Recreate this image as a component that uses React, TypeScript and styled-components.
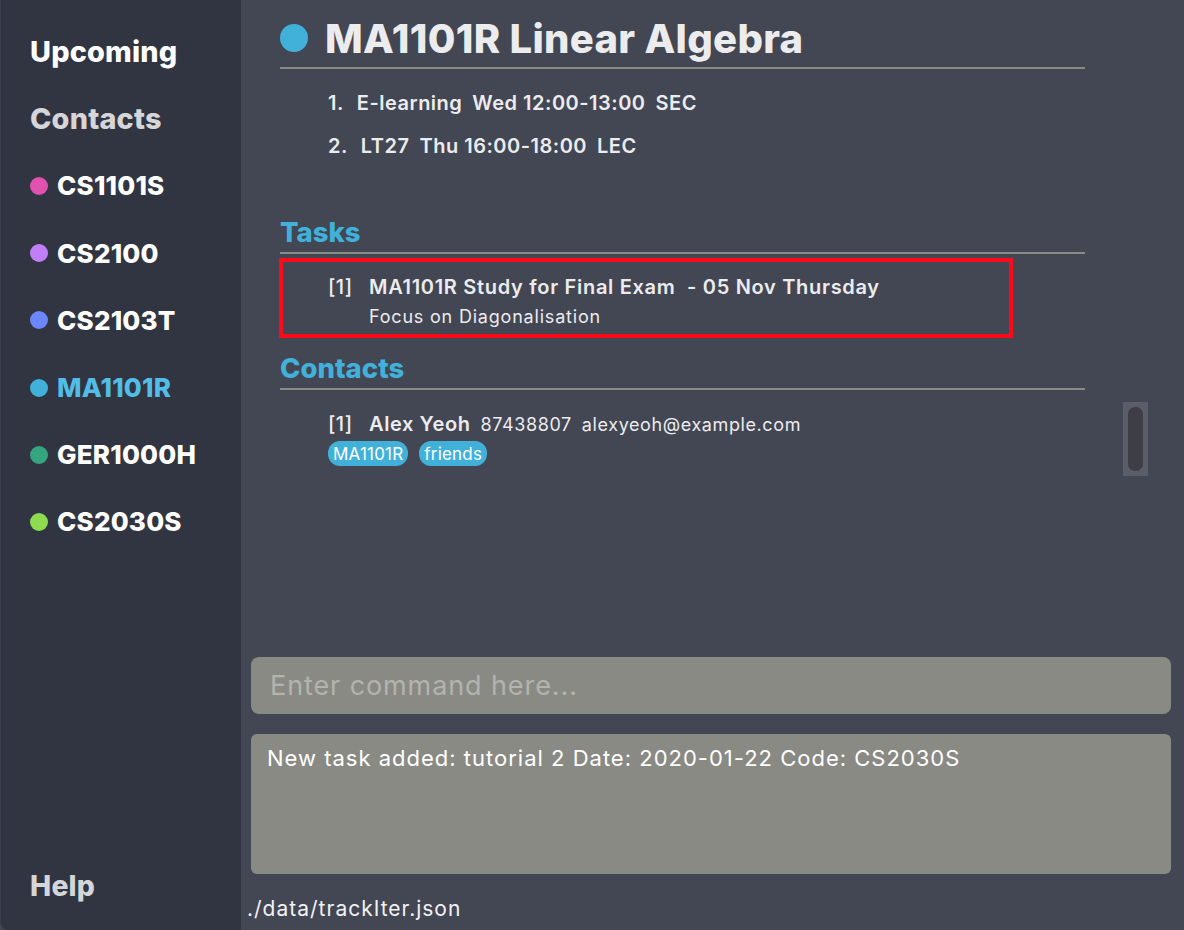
import React from "react";
import styled, { createGlobalStyle } from "styled-components";

const Global = createGlobalStyle`
  html, body { margin: 0; padding: 0; background: #434653; }
  body { font-family: "Inter", "Noto Sans", sans-serif; }
  * { box-sizing: border-box; }
`;

const Shell = styled.div`
  display: grid;
  grid-template-columns: 241px 1fr;
  width: 1184px;
  height: 930px;
  overflow: hidden;
`;

const Sidebar = styled.nav`
  background: #313441;
  display: flex;
  flex-direction: column;
  padding: 18px 0 10px 29px;
  border-bottom-left-radius: 8px;
  border-left: 1px solid #3b3e4c;
`;

const NavItem = styled.div<{ $color?: string; $heading?: "main" | "muted" }>`
  height: 67.2px;
  display: flex;
  align-items: center;
  gap: 9px;
  font-weight: 800;
  font-size: ${(p) => (p.$heading ? "28.8px" : "26px")};
  letter-spacing: 0.2px;
  color: ${(p) => p.$color ?? (p.$heading === "muted" ? "#d6d6d8" : "#ffffff")};
`;

const HelpItem = styled(NavItem)`
  margin-top: auto;
  font-size: 28.3px;
`;

const Dot = styled.span<{ $color: string; $size?: number }>`
  width: ${(p) => p.$size ?? 18}px;
  height: ${(p) => p.$size ?? 18}px;
  border-radius: 50%;
  background: ${(p) => p.$color};
  flex-shrink: 0;
`;

const Main = styled.main`
  display: flex;
  flex-direction: column;
  min-width: 0;
`;

const ContentArea = styled.section`
  flex: 1;
  display: grid;
  grid-template-columns: 805px 1fr;
  padding-left: 39px;
`;

const Content = styled.div`
  display: flex;
  flex-direction: column;
  color: #ececee;
`;

const TitleRow = styled.header`
  display: flex;
  align-items: center;
  gap: 17px;
  height: 69px;
  padding-top: 9px;
  border-bottom: 2px solid #8b8b86;
`;

const Title = styled.h1`
  margin: 0;
  font-size: 40px;
  font-weight: 800;
  color: #ececee;
  letter-spacing: 0.3px;
`;

const LessonList = styled.ol`
  list-style: none;
  margin: 0;
  padding: 12px 0 0 48px;
  display: flex;
  flex-direction: column;
`;

const Lesson = styled.li`
  height: 43px;
  display: flex;
  align-items: center;
  gap: 10px;
  font-size: 20px;
  font-weight: 600;
  letter-spacing: 0.5px;
  color: #ececee;
`;

const LessonNo = styled.span`
  margin-right: 3px;
`;

const SectionHeading = styled.h2<{ $top: number }>`
  margin: ${(p) => p.$top}px 0 0;
  height: 40px;
  display: flex;
  align-items: flex-end;
  padding-bottom: 3px;
  font-size: 27.5px;
  font-weight: 800;
  color: #41b1da;
  border-bottom: 2px solid #8b8b86;
`;

const TaskCard = styled.div`
  margin: 4px 0 0 -1px;
  width: 734px;
  height: 80px;
  border: 4px solid #ff0a1a;
  padding: 13px 0 0 45px;
  display: grid;
  grid-template-columns: 41px 1fr;
  row-gap: 0px;
`;

const Index = styled.span`
  font-size: 20px;
  font-weight: 500;
  letter-spacing: 0.5px;
  color: #ececee;
  width: 31px;
`;

const TaskTitle = styled.span`
  font-size: 20px;
  font-weight: 600;
  letter-spacing: 0.7px;
  color: #ececee;
  white-space: pre;
`;

const TaskNote = styled.span`
  grid-column: 2;
  font-size: 18px;
  font-weight: 400;
  letter-spacing: 0.8px;
  color: #ececee;
`;

const ContactCard = styled.div`
  padding: 22px 0 0 48px;
  display: flex;
  flex-direction: column;
  gap: 5px;
`;

const ContactLine = styled.div`
  display: flex;
  align-items: baseline;
  gap: 10px;
  color: #ececee;
`;

const ContactName = styled.span`
  font-size: 20px;
  font-weight: 600;
  letter-spacing: 0.6px;
`;

const ContactMeta = styled.span`
  font-size: 18px;
  font-weight: 400;
  letter-spacing: 0.6px;
`;

const Tags = styled.div`
  display: flex;
  gap: 11px;
`;

const Tag = styled.span`
  height: 25px;
  padding: 0 5px;
  border-radius: 12px;
  background: #41b1da;
  color: #ffffff;
  font-size: 17px;
  letter-spacing: 0.2px;
  display: flex;
  align-items: center;
`;

const ScrollCol = styled.div`
  padding: 402px 0 0 38px;
`;

const ScrollTrack = styled.div`
  width: 25px;
  height: 74px;
  background: #5b5d6a;
  padding: 5px;
`;

const ScrollThumb = styled.div`
  width: 15px;
  height: 64px;
  border-radius: 7px;
  background: #3d3e46;
`;

const CommandBox = styled.div`
  margin: 0 13px 0 10px;
  height: 57px;
  border-radius: 8px;
  background: #8a8a85;
  display: flex;
  align-items: center;
  padding-left: 19px;
  font-size: 27px;
  letter-spacing: 0.9px;
  color: #b3b3af;
`;

const ResultBox = styled.div`
  margin: 20px 13px 0 10px;
  height: 140px;
  border-radius: 6px;
  background: #8a8a85;
  padding: 11px 16px;
  font-size: 22px;
  letter-spacing: 1px;
  color: #ffffff;
`;

const StatusBar = styled.footer`
  height: 56px;
  display: flex;
  align-items: flex-end;
  padding: 0 0 9px 6px;
  font-size: 21px;
  letter-spacing: 1px;
  color: #f2f2f2;
`;

const modules = [
  { code: "CS1101S", color: "#e052ad" },
  { code: "CS2100", color: "#c07ef7" },
  { code: "CS2103T", color: "#6d86fb" },
  { code: "MA1101R", color: "#41b1da", active: true },
  { code: "GER1000H", color: "#35a57f" },
  { code: "CS2030S", color: "#8ddc50" },
];

export default function App() {
  return (
    <>
      <Global />
      <Shell>
        <Sidebar>
          <NavItem $heading="main">Upcoming</NavItem>
          <NavItem $heading="muted">Contacts</NavItem>
          {modules.map((m) => (
            <NavItem key={m.code} $color={m.active ? "#52bde6" : undefined}>
              <Dot $color={m.color} />
              {m.code}
            </NavItem>
          ))}
          <HelpItem $heading="muted">Help</HelpItem>
        </Sidebar>
        <Main>
          <ContentArea>
            <Content>
              <TitleRow>
                <Dot $color="#41b1da" $size={28} />
                <Title>MA1101R Linear Algebra</Title>
              </TitleRow>
              <LessonList>
                <Lesson>
                  <LessonNo>1.</LessonNo>
                  <span>E-learning</span>
                  <span>Wed 12:00-13:00</span>
                  <span>SEC</span>
                </Lesson>
                <Lesson>
                  <LessonNo>2.</LessonNo>
                  <span>LT27</span>
                  <span>Thu 16:00-18:00</span>
                  <span>LEC</span>
                </Lesson>
              </LessonList>
              <SectionHeading $top={47}>Tasks</SectionHeading>
              <TaskCard>
                <Index>[1]</Index>
                <TaskTitle>MA1101R Study for Final Exam  - 05 Nov Thursday</TaskTitle>
                <TaskNote>Focus on Diagonalisation</TaskNote>
              </TaskCard>
              <SectionHeading $top={12}>Contacts</SectionHeading>
              <ContactCard>
                <ContactLine>
                  <Index>[1]</Index>
                  <ContactName>Alex Yeoh</ContactName>
                  <ContactMeta>87438807</ContactMeta>
                  <ContactMeta>alexyeoh@example.com</ContactMeta>
                </ContactLine>
                <Tags>
                  <Tag>MA1101R</Tag>
                  <Tag>friends</Tag>
                </Tags>
              </ContactCard>
            </Content>
            <ScrollCol>
              <ScrollTrack>
                <ScrollThumb />
              </ScrollTrack>
            </ScrollCol>
          </ContentArea>
          <CommandBox>Enter command here...</CommandBox>
          <ResultBox>New task added: tutorial 2 Date: 2020-01-22 Code: CS2030S</ResultBox>
          <StatusBar>./data/trackIter.json</StatusBar>
        </Main>
      </Shell>
    </>
  );
}
